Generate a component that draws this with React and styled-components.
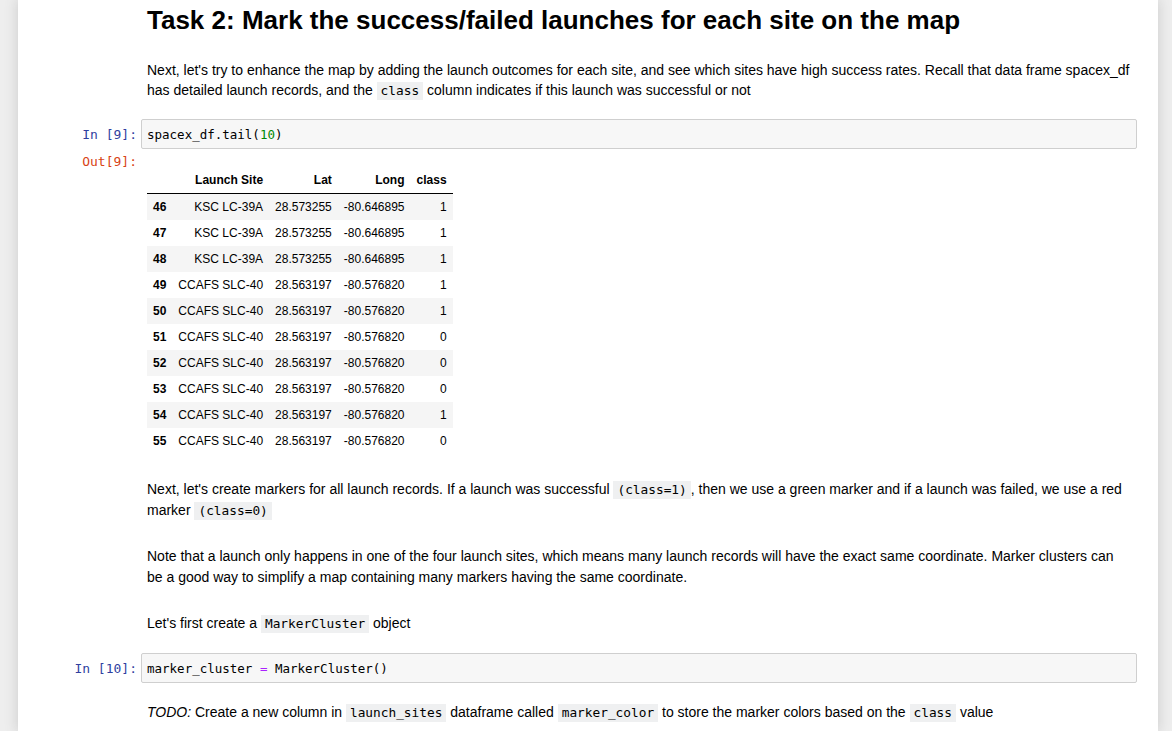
import React from "react";
import styled, { createGlobalStyle } from "styled-components";

const Global = createGlobalStyle`
  html, body { margin: 0; padding: 0; }
  body {
    background: #eeeeee;
    font-family: "Liberation Sans", Arial, sans-serif;
    font-size: 14px;
    color: #000;
    overflow: hidden;
  }
`;

const Page = styled.div`
  min-height: 100vh;
  display: flex;
  padding-left: 18px;
`;

const Notebook = styled.div`
  width: 1140px;
  min-height: 731px;
  background: #fff;
  box-shadow: 0 0 12px 1px rgba(87, 87, 87, 0.2);
  padding: 0 21px 0 5px;
  box-sizing: border-box;
  display: flex;
  flex-direction: column;
`;

const Cell = styled.div`
  display: flex;
  align-items: flex-start;
  margin-top: ${(p) => p.$mt || 0}px;
`;

const Prompt = styled.div`
  width: 118px;
  flex: none;
  box-sizing: border-box;
  padding-right: 4px;
  padding-top: ${(p) => p.$pt || 0}px;
  text-align: right;
  font-family: "DejaVu Sans Mono", "Liberation Mono", monospace;
  font-size: 13px;
  line-height: 18px;
  color: ${(p) => (p.$out ? "#D84315" : "#303F9F")};
  white-space: pre;
`;

const Body = styled.div`
  flex: 1;
  min-width: 0;
  padding: 0 6px 0 6px;
`;

const Title = styled.h1`
  margin: 3px 0 0;
  font-size: 26px;
  line-height: 34px;
  font-weight: bold;
`;

const Para = styled.p`
  margin: ${(p) => p.$mt || 0}px 0 0;
  line-height: ${(p) => p.$lh || 21}px;
`;

const InlineCode = styled.code`
  display: inline-block;
  font-family: "DejaVu Sans Mono", "Liberation Mono", monospace;
  font-size: 12.8px;
  line-height: 16px;
  background: #eff0f1;
  padding: 1px 4px;
`;

const InputArea = styled.div`
  flex: 1;
  min-width: 0;
  background: #f7f7f7;
  border: 1px solid #cfcfcf;
  border-radius: 2px;
  padding: 7px 5px 5px;
  font-family: "DejaVu Sans Mono", "Liberation Mono", monospace;
  font-size: 12.5px;
  line-height: 16px;
  white-space: pre;
`;

const Num = styled.span`
  color: #008800;
`;

const Op = styled.span`
  color: #aa22ff;
`;

const OutputBody = styled.div`
  flex: 1;
  padding: 15px 0 0 6px;
`;

const Table = styled.table`
  border-collapse: collapse;
  border: none;
  font-size: 12px;
  color: #000;
`;

const Th = styled.th`
  text-align: right;
  font-weight: bold;
  padding: 6px;
  line-height: 14px;
  white-space: nowrap;
`;

const HeadRow = styled.tr`
  border-bottom: 1px solid #000;
`;

const Row = styled.tr`
  background: ${(p) => (p.$odd ? "#f5f5f5" : "#fff")};
`;

const Td = styled.td`
  text-align: right;
  padding: 6px;
  line-height: 14px;
  white-space: nowrap;
`;

const rows = [
  [46, "KSC LC-39A", "28.573255", "-80.646895", 1],
  [47, "KSC LC-39A", "28.573255", "-80.646895", 1],
  [48, "KSC LC-39A", "28.573255", "-80.646895", 1],
  [49, "CCAFS SLC-40", "28.563197", "-80.576820", 1],
  [50, "CCAFS SLC-40", "28.563197", "-80.576820", 1],
  [51, "CCAFS SLC-40", "28.563197", "-80.576820", 0],
  [52, "CCAFS SLC-40", "28.563197", "-80.576820", 0],
  [53, "CCAFS SLC-40", "28.563197", "-80.576820", 0],
  [54, "CCAFS SLC-40", "28.563197", "-80.576820", 1],
  [55, "CCAFS SLC-40", "28.563197", "-80.576820", 0],
];

export default function App() {
  return (
    <>
      <Global />
      <Page>
        <Notebook>
          <Cell>
            <Prompt />
            <Body>
              <Title>Task 2: Mark the success/failed launches for each site on the map</Title>
              <Para $mt={23} $lh={20}>
                Next, let's try to enhance the map by adding the launch outcomes for each site, and see which sites have high success rates. Recall that data frame spacex_df has detailed launch records, and the <InlineCode>class</InlineCode> column indicates if this launch was successful or not
              </Para>
            </Body>
          </Cell>

          <Cell $mt={19}>
            <Prompt $pt={7}>In [9]:</Prompt>
            <InputArea>
              spacex_df.tail(<Num>10</Num>)
            </InputArea>
          </Cell>

          <Cell $mt={3}>
            <Prompt $out $pt={1}>Out[9]:</Prompt>
            <OutputBody>
              <Table>
                <thead>
                  <HeadRow>
                    <Th />
                    <Th>Launch Site</Th>
                    <Th>Lat</Th>
                    <Th>Long</Th>
                    <Th>class</Th>
                  </HeadRow>
                </thead>
                <tbody>
                  {rows.map((r, i) => (
                    <Row key={r[0]} $odd={i % 2 === 0}>
                      <Th>{r[0]}</Th>
                      <Td>{r[1]}</Td>
                      <Td>{r[2]}</Td>
                      <Td>{r[3]}</Td>
                      <Td>{r[4]}</Td>
                    </Row>
                  ))}
                </tbody>
              </Table>
            </OutputBody>
          </Cell>

          <Cell $mt={25}>
            <Prompt />
            <Body>
              <Para>
                Next, let's create markers for all launch records. If a launch was successful <InlineCode>(class=1)</InlineCode>, then we use a green marker and if a launch was failed, we use a red marker <InlineCode>(class=0)</InlineCode>
              </Para>
              <Para $mt={25}>
                Note that a launch only happens in one of the four launch sites, which means many launch records will have the exact same coordinate. Marker clusters can be a good way to simplify a map containing many markers having the same coordinate.
              </Para>
              <Para $mt={25}>
                Let's first create a <InlineCode>MarkerCluster</InlineCode> object
              </Para>
            </Body>
          </Cell>

          <Cell $mt={19}>
            <Prompt $pt={7}>In [10]:</Prompt>
            <InputArea>
              marker_cluster <Op>=</Op> MarkerCluster()
            </InputArea>
          </Cell>

          <Cell $mt={19}>
            <Prompt />
            <Body>
              <Para>
                <i>TODO:</i> Create a new column in <InlineCode>launch_sites</InlineCode> dataframe called <InlineCode>marker_color</InlineCode> to store the marker colors based on the <InlineCode>class</InlineCode> value
              </Para>
            </Body>
          </Cell>
        </Notebook>
      </Page>
    </>
  );
}
